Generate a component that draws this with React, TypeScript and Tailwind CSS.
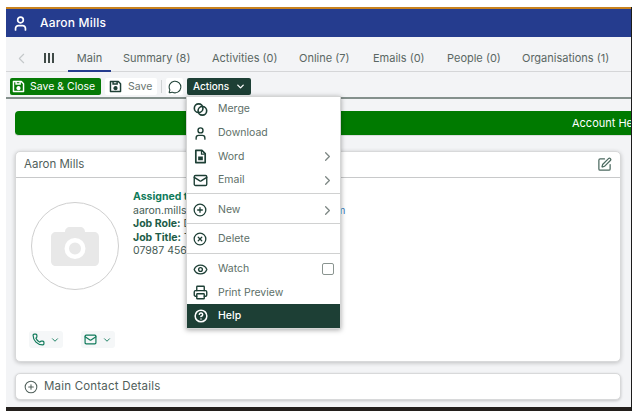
import React from 'react';
import {
  ChevronDown,
  ChevronLeft,
  ChevronRight,
  CircleHelp,
  CirclePlus,
  CircleX,
  Eye,
  Mail,
  MessageCircle,
  Phone,
  Printer,
  SquarePen,
  User,
} from 'lucide-react';

const font = { fontFamily: '"Inter", "Noto Sans", sans-serif' };

const SaveIcon: React.FC<{ className?: string }> = ({ className }) => (
  <svg viewBox="0 0 16 16" className={className} fill="none" stroke="currentColor" strokeWidth="1.8">
    <path d="M2.500 1.800h9l2.700 2.700v9.700H1.800V1.800z" strokeLinejoin="round" />
    <path d="M5 2v3h5V2" />
    <circle cx="8" cy="10" r="1.700" fill="currentColor" />
  </svg>
);

const MergeIcon = () => (
  <svg viewBox="0 0 16 16" className="h-[15px] w-[15px]" fill="none" stroke="currentColor" strokeWidth="1.700">
    <circle cx="6" cy="6.600" r="4.600" />
    <circle cx="10" cy="9.400" r="4.600" />
  </svg>
);

const WordIcon = () => (
  <svg viewBox="0 0 16 16" className="h-[15px] w-[15px]" fill="none" stroke="currentColor" strokeWidth="1.800">
    <path d="M3 1.500h6.500L13 5v9.500H3z" strokeLinejoin="round" />
    <rect x="5.500" y="8" width="5" height="4" fill="currentColor" stroke="none" />
    <path d="M9 2v3.500h3.500" strokeWidth="1.200" />
  </svg>
);

const CameraIcon = () => (
  <svg viewBox="0 0 48 40" className="h-[42px] w-[48px]">
    <path
      fill="#e8e8e8"
      fillRule="evenodd"
      d="M14 6c0-3 2-5 5-5h10c3 0 5 2 5 5h9c3 0 5 2 5 5v24c0 3-2 5-5 5H5c-3 0-5-2-5-5V11c0-3 2-5 5-5zM24 12a10.500 10.500 0 1 0 0 21 10.500 10.500 0 0 0 0-21zM24 16.500a6 6 0 1 1 0 12 6 6 0 0 1 0-12z"
    />
  </svg>
);

const tabs = [
  { label: 'Summary (8)', w: 'w-[68px]' },
  { label: 'Activities (0)', w: 'w-[66px]' },
  { label: 'Online (7)', w: 'w-[53px]' },
  { label: 'Emails (0)', w: 'w-[53px]' },
  { label: 'People (0)', w: 'w-[54px]' },
  { label: 'Organisations (1)', w: 'w-[90px]' },
];

const MenuRow: React.FC<{
  icon: React.ReactNode;
  label: string;
  arrow?: boolean;
  check?: boolean;
  h?: string;
}> = ({ icon, label, arrow, check, h = 'h-[24px]' }) => (
  <div className={`flex ${h} items-center pl-[6px] pr-[5px] text-[#5d6f68]`}>
    <span className="flex w-[25px] justify-start text-[#1d3f35]">{icon}</span>
    <span className="flex-1 text-[10.5px]">{label}</span>
    {arrow && <ChevronRight className="h-[15px] w-[15px] text-[#7d8784]" strokeWidth={2} />}
    {check && <span className="mr-[1px] h-[12px] w-[12px] rounded-[2px] border border-[#8a9490] bg-white" />}
  </div>
);

const App: React.FC = () => {
  return (
    <div className="relative h-[420px] w-[636px] overflow-hidden bg-white pl-[6px] pt-[7px]" style={font}>
      <div className="relative flex h-[404px] w-[626px] flex-col overflow-hidden border-r border-[#1c1c1c] bg-[#f3f4f6]">
        <div className="h-[2px] shrink-0 bg-[#c8821e]" />
        <div className="flex h-[28px] shrink-0 items-center bg-[#253c8e] pl-[6px] text-white">
          <User className="h-[17px] w-[17px]" strokeWidth={2.4} />
          <span className="ml-[11px] text-[12px] font-medium tracking-[0.2px]">Aaron Mills</span>
        </div>

        <div className="flex h-[35px] shrink-0 items-center border-b border-[#d5d6d8] pl-[7px] pt-[8px] text-[11px] text-[#5a6763]">
          <ChevronLeft className="h-[17px] w-[17px] text-[#c4c8ca]" strokeWidth={1.6} />
          <span className="ml-[14px] flex gap-[2px]">
            <span className="h-[10px] w-[2px] bg-[#3f4a47]" />
            <span className="h-[10px] w-[2px] bg-[#3f4a47]" />
            <span className="h-[10px] w-[2px] bg-[#3f4a47]" />
          </span>
          <span className="relative ml-[14px] flex h-[26px] w-[43px] items-center justify-center">
            Main
            <span className="absolute bottom-[-1px] left-0 right-0 h-[2px] bg-[#253c8e]" />
          </span>
          {tabs.map((tab, i) => (
            <span key={tab.label} className={`${tab.w} ${i === 0 ? 'ml-[12px]' : 'ml-[21px]'} whitespace-nowrap`}>
              {tab.label}
            </span>
          ))}
        </div>

        <div className="flex h-[27px] shrink-0 items-center border-b-2 border-[#84908c] pl-[4px] pt-[4px] text-[10.5px]">
          <button className="flex h-[17px] w-[91px] items-center rounded-[2px] bg-[#067a06] pl-[2px] text-white">
            <SaveIcon className="h-[13px] w-[13px]" />
            <span className="ml-[5px] whitespace-nowrap">Save &amp; Close</span>
          </button>
          <button className="ml-[4px] flex h-[17px] w-[52px] items-center rounded-[2px] bg-white pl-[4px] text-[#6a7672]">
            <SaveIcon className="h-[13px] w-[13px] text-[#1d3f35]" />
            <span className="ml-[6px]">Save</span>
          </button>
          <span className="ml-[4px] h-[13px] w-px bg-[#cfd2d3]" />
          <span className="ml-[4px] flex h-[17px] w-[17px] items-center justify-center rounded-[2px] bg-white text-[#1d3f35]">
            <MessageCircle className="h-[14px] w-[14px]" strokeWidth={1.8} />
          </span>
          <button className="ml-[4px] flex h-[17px] w-[64px] items-center rounded-[2px] bg-[#1d3f35] pl-[6px] text-[10px] font-medium text-white">
            Actions
            <ChevronDown className="ml-[6px] h-[11px] w-[11px]" strokeWidth={3} />
          </button>
        </div>

        <div className="flex flex-1 flex-col pl-[9px]">
          <div className="mt-[12px] flex h-[25px] w-[640px] shrink-0 items-center rounded-[4px] border-b border-[#d9dcdc] bg-[#007a00] pl-[557px] text-[11px] text-white">
            <span className="whitespace-nowrap">Account Health</span>
          </div>

          <div className="mt-[15px] flex h-[211px] w-[606px] shrink-0 flex-col rounded-[5px] border border-[#d8d9da] bg-white shadow-[0_1px_4px_rgba(0,0,0,0.22)]">
            <div className="flex h-[26px] shrink-0 items-center justify-between border-b border-[#c8c9ca] pl-[8px] pr-[8px] text-[#51605b]">
              <span className="text-[11.5px]">Aaron Mills</span>
              <SquarePen className="h-[15px] w-[15px] text-[#4c6a60]" strokeWidth={2} />
            </div>
            <div className="flex pl-[15px]">
              <div className="mt-[24px] flex h-[88px] w-[88px] shrink-0 items-center justify-center rounded-full border border-[#cfcfcf]">
                <CameraIcon />
              </div>
              <div className="ml-[14px] mt-[12px] text-[10.5px] leading-[13.500px] text-[#445a53]">
                <div className="font-bold text-[#0f7a5a]">Assigned to: Aaron Mills</div>
                <div className="whitespace-nowrap">
                  aaron.mills@<span className="text-[#3f7fc0]">examplecharityservicesg.com</span>
                </div>
                <div>
                  <span className="font-bold text-[#1d5c48]">Job Role:</span> Director
                </div>
                <div>
                  <span className="font-bold text-[#1d5c48]">Job Title:</span> Trustee
                </div>
                <div>07987 456512</div>
              </div>
            </div>
            <div className="ml-[13px] mt-[41px] flex gap-[18px]">
              <span className="flex h-[17px] w-[34px] items-center justify-center gap-[5px] rounded-[3px] bg-[#f5f7f8] text-[#0f7a5a]">
                <Phone className="h-[13px] w-[13px]" strokeWidth={2.2} />
                <ChevronDown className="h-[10px] w-[10px]" strokeWidth={2.2} />
              </span>
              <span className="flex h-[17px] w-[34px] items-center justify-center gap-[5px] rounded-[3px] bg-[#f5f7f8] text-[#0f7a5a]">
                <Mail className="h-[13px] w-[13px]" strokeWidth={2.2} />
                <ChevronDown className="h-[10px] w-[10px]" strokeWidth={2.2} />
              </span>
            </div>
          </div>

          <div className="mt-[11px] flex h-[27px] w-[606px] shrink-0 items-center rounded-[5px] border border-[#d8d9da] bg-white pl-[8px] text-[#51605b] shadow-[0_1px_3px_rgba(0,0,0,0.2)]">
            <CirclePlus className="h-[14px] w-[14px]" strokeWidth={1.8} />
            <span className="ml-[6px] text-[11.5px] tracking-[0.2px]">Main Contact Details</span>
          </div>
        </div>

        <div className="h-[4px] shrink-0 bg-[#231f1c]" />

        <div className="absolute left-[180px] top-[89px] w-[155px] border border-[#d4d5d5] bg-white shadow-[0_1px_5px_rgba(0,0,0,0.35)]">
          <MenuRow icon={<MergeIcon />} label="Merge" />
          <MenuRow icon={<User className="h-[15px] w-[15px]" strokeWidth={2.2} />} label="Download" />
          <MenuRow icon={<WordIcon />} label="Word" arrow h="h-[23px]" />
          <MenuRow icon={<Mail className="h-[15px] w-[15px]" strokeWidth={2.2} />} label="Email" arrow />
          <div className="mb-[4px] mt-[1px] h-px bg-[#d0d1d1]" />
          <MenuRow icon={<CirclePlus className="h-[14px] w-[14px]" strokeWidth={2.2} />} label="New" arrow />
          <div className="mb-[3px] mt-[1px] h-px bg-[#d0d1d1]" />
          <MenuRow icon={<CircleX className="h-[14px] w-[14px]" strokeWidth={2.2} />} label="Delete" />
          <div className="mb-[3px] mt-[2px] h-px bg-[#d0d1d1]" />
          <MenuRow icon={<Eye className="h-[15px] w-[15px]" strokeWidth={2.2} />} label="Watch" check />
          <MenuRow icon={<Printer className="h-[15px] w-[15px]" strokeWidth={2.2} />} label="Print Preview" h="h-[23px]" />
          <div className="flex h-[24px] items-center bg-[#1d3f35] pl-[7px] font-medium text-white">
            <CircleHelp className="h-[14px] w-[14px]" strokeWidth={2.6} />
            <span className="ml-[10px] text-[10.5px]">Help</span>
          </div>
        </div>
      </div>
    </div>
  );
};

export default App;
